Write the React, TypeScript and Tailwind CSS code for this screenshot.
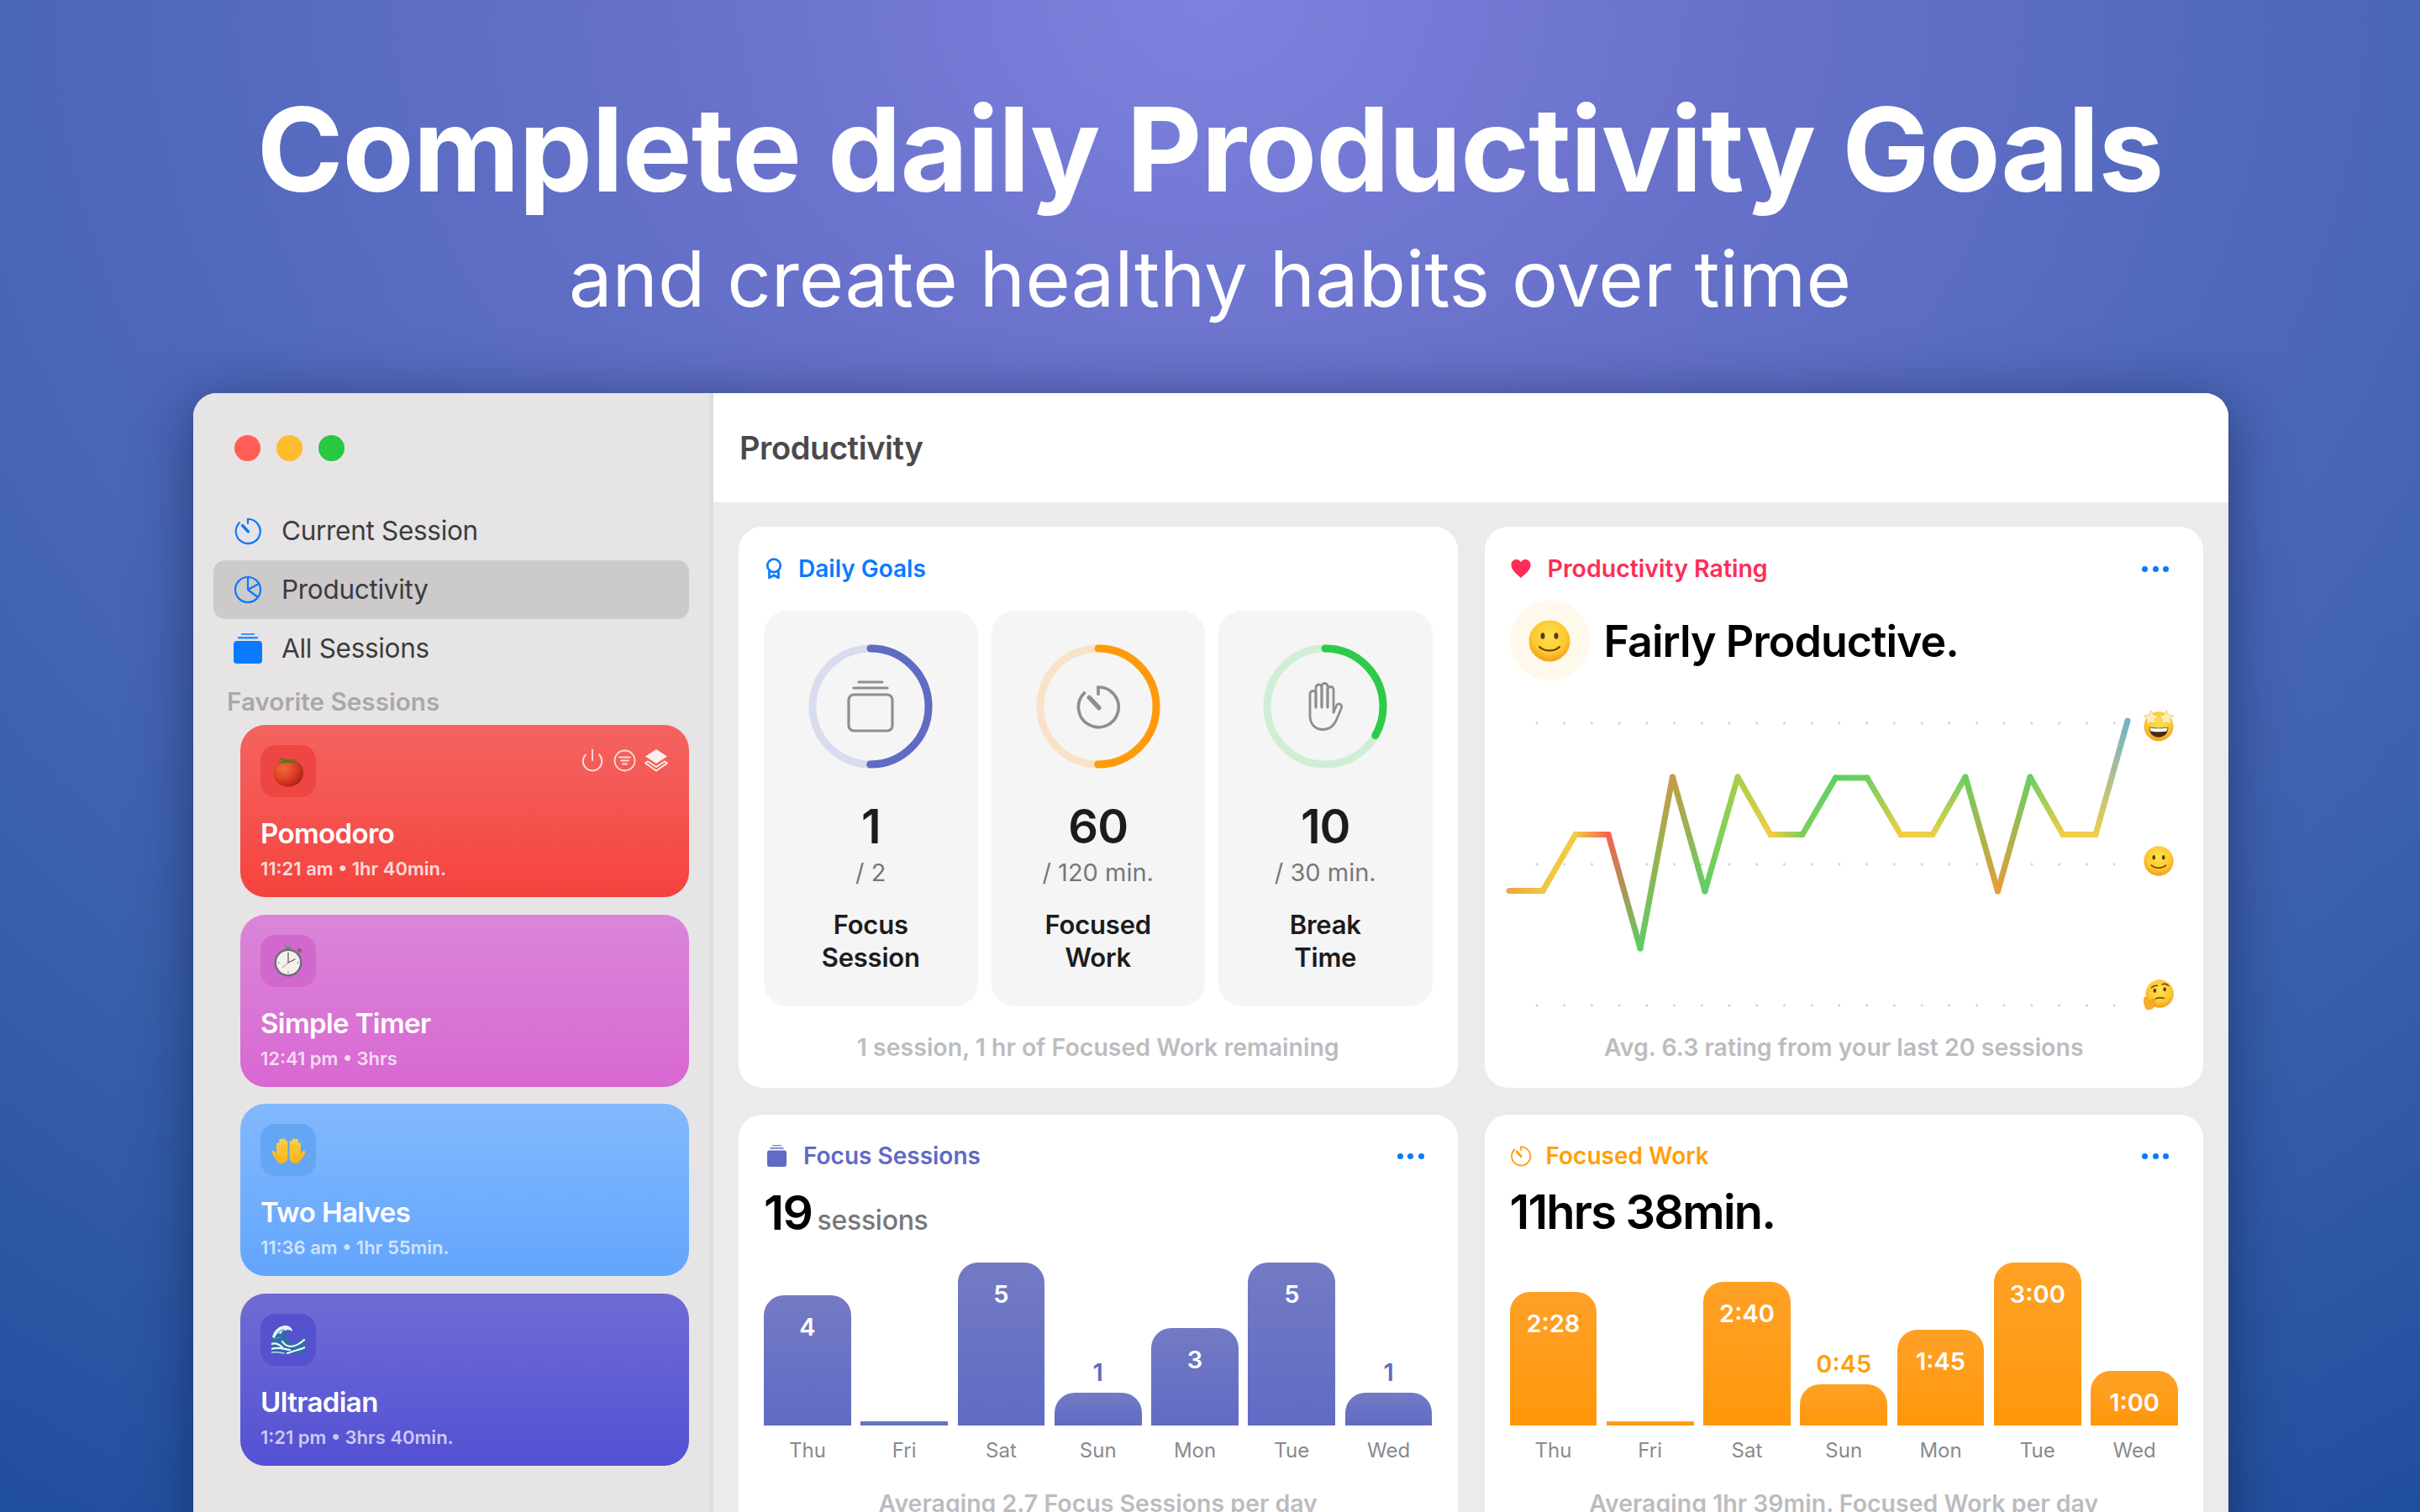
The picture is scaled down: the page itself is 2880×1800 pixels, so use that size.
import React from "react";
import { Power } from "lucide-react";

const TimerIcon = ({ size = 34, color = "#0a7aff", sw = 2.2 }: { size?: number; color?: string; sw?: number }) => (
  <svg width={size} height={size} viewBox="0 0 34 34" fill="none" stroke={color} strokeWidth={sw} strokeLinecap="round">
    <path d="M17 3a14.5 14.5 0 1 1-10 4.2" />
    <path d="M17 3v5" />
    <path d="M17.5 18 10.5 10.5" strokeWidth={sw * 1.5} />
  </svg>
);

const PieIcon = () => (
  <svg width="34" height="34" viewBox="0 0 34 34" fill="none" stroke="#0a7aff" strokeWidth="2.2" strokeLinejoin="round">
    <circle cx="17" cy="17" r="15" />
    <path d="M17 2v15l12 9" />
    <path d="M17 17 30 10" />
  </svg>
);

const StackIcon = ({ color, w = 35, h = 36 }: { color: string; w?: number; h?: number }) => (
  <svg width={w} height={h} viewBox="0 0 35 36" fill={color} preserveAspectRatio="none">
    <rect x="9" y="0" width="17" height="2" rx="1" opacity=".75" />
    <rect x="5" y="4" width="25" height="2.5" rx="1.2" opacity=".85" />
    <rect x="0" y="9" width="35" height="27" rx="4" />
  </svg>
);

const OutlineStack = () => (
  <svg width="56" height="62" viewBox="0 0 56 62" fill="none" stroke="#8e8e93" strokeWidth="3.2" strokeLinecap="round">
    <path d="M14 2h28" />
    <path d="M8 9h40" />
    <rect x="2" y="17" width="52" height="43" rx="6" />
  </svg>
);

const RaisedHand = () => (
  <svg width="44" height="58" viewBox="0 0 44 58" fill="none" stroke="#8e8e93" strokeWidth="2.8" strokeLinecap="round" strokeLinejoin="round">
    <path d="M4 34V14a3.500 3.500 0 0 1 7 0v16" />
    <path d="M11 30V6.500a3.500 3.500 0 0 1 7 0V30" />
    <path d="M18 30V5a3.500 3.500 0 0 1 7 0v25" />
    <path d="M25 30V9a3.500 3.500 0 0 1 7 0v27" />
    <path d="M32 36l3.500-8a3.200 3.200 0 0 1 6 2.400L35 46C31.500 53 27 56.500 19.500 56.500 10 56.500 4 50 4 40v-6" />
  </svg>
);

const ListCircle = () => (
  <svg width="27" height="27" viewBox="0 0 27 27" fill="none" stroke="#fff" strokeOpacity=".8" strokeWidth="1.8" strokeLinecap="round">
    <circle cx="13.5" cy="13.5" r="12" />
    <path d="M7 9.5h13M9 13.5h9M11 17.5h5" />
  </svg>
);

const LayersIcon = () => (
  <svg width="28" height="28" viewBox="0 0 28 28">
    <path d="M14 1 27 9.5 14 18 1 9.5Z" fill="#fff" fillOpacity=".9" />
    <path d="M4 15.5 1 17.5l13 9 13-9-3-2-10 6.5Z" fill="none" stroke="#fff" strokeOpacity=".9" strokeWidth="1.8" strokeLinejoin="round" />
  </svg>
);

const Award = () => (
  <svg width="20" height="26" viewBox="0 0 22 28" fill="none" stroke="#0a7aff" strokeWidth="3" strokeLinejoin="round">
    <circle cx="11" cy="10" r="8.5" />
    <path d="M5 17v9l6-3.500 6 3.500v-9" />
  </svg>
);

const Heart = () => (
  <svg width="24" height="24" viewBox="0 0 24 24" fill="#ff2d55">
    <path d="M12 23C5 17 .5 13 .5 7.5.5 3.6 3.400 1 6.700 1 9 1 11 2.300 12 4.300 13 2.300 15 1 17.300 1c3.300 0 6.200 2.600 6.200 6.500C23.500 13 19 17 12 23Z" />
  </svg>
);

const Dots = () => (
  <div className="flex w-[32px] justify-between">
    <span className="h-[7px] w-[7px] rounded-full bg-[#0a7aff]" />
    <span className="h-[7px] w-[7px] rounded-full bg-[#0a7aff]" />
    <span className="h-[7px] w-[7px] rounded-full bg-[#0a7aff]" />
  </div>
);

const FaceDefs = ({ id }: { id: string }) => (
  <defs>
    <radialGradient id={id} cx=".5" cy=".38" r=".66">
      <stop offset="0" stopColor="#ffe04f" />
      <stop offset=".62" stopColor="#fdc92f" />
      <stop offset="1" stopColor="#f1951a" />
    </radialGradient>
  </defs>
);

const Smile = ({ size, id }: { size: number; id: string }) => (
  <svg width={size} height={size} viewBox="0 0 50 50">
    <FaceDefs id={id} />
    <circle cx="25" cy="25" r="24.500" fill={`url(#${id})`} />
    <ellipse cx="17" cy="19" rx="2.500" ry="3.800" fill="#5a3a14" />
    <ellipse cx="33" cy="19" rx="2.500" ry="3.800" fill="#5a3a14" />
    <path d="M13 32c3.500 3.500 7.500 4.500 12 4.500s8.500-1 12-4.500" fill="none" stroke="#5a3a14" strokeWidth="2" strokeLinecap="round" />
  </svg>
);

const StarPath = ({ cx, cy, r }: { cx: number; cy: number; r: number }) => {
  const pts: string[] = [];
  for (let i = 0; i < 10; i++) {
    const a = (Math.PI / 5) * i - Math.PI / 2;
    const rr = i % 2 ? r * 0.52 : r;
    pts.push(`${(cx + rr * Math.cos(a)).toFixed(2)},${(cy + rr * Math.sin(a)).toFixed(2)}`);
  }
  return <polygon points={pts.join(" ")} fill="#fdeeb9" stroke="#efbb4a" strokeWidth=".9" strokeLinejoin="round" />;
};

const StarStruck = ({ size }: { size: number }) => (
  <svg width={size} height={size} viewBox="0 0 50 50" className="overflow-visible">
    <FaceDefs id="fS" />
    <circle cx="25" cy="26" r="23" fill="url(#fS)" />
    <path d="M10 27c5 2 25 2 30 0 0 10-6 16-15 16S10 37 10 27Z" fill="#4a2a12" />
    <path d="M11 28c6 1.800 22 1.800 28 0-.300 2.500-.700 4-1.500 5.500-6 1.200-19 1.200-25 0C11.700 32 11.300 30.500 11 28Z" fill="#fff" />
    <StarPath cx={13} cy={13} r={12} />
    <StarPath cx={37} cy={13} r={12} />
  </svg>
);

const Thinking = ({ size }: { size: number }) => (
  <svg width={size} height={size} viewBox="0 0 50 50">
    <FaceDefs id="fT" />
    <circle cx="26" cy="23" r="22.500" fill="url(#fT)" />
    <path d="M13 13c3-3 6-3.500 9-3" fill="none" stroke="#5a3a14" strokeWidth="2" strokeLinecap="round" />
    <path d="M30 8c3-1.500 7-1 10 2" fill="none" stroke="#5a3a14" strokeWidth="2" strokeLinecap="round" />
    <ellipse cx="18" cy="18" rx="2.400" ry="3.400" fill="#5a3a14" />
    <ellipse cx="34" cy="16" rx="2.400" ry="3.400" fill="#5a3a14" />
    <path d="M20 31c4-1.800 8-2 13-.8" fill="none" stroke="#5a3a14" strokeWidth="2" strokeLinecap="round" />
    <path d="M4 47c-3-5-4-12-3-17 1-2 3-2 4 0l1 6 10-5c3-1 5 2 2 4l-2 2c3 2 3 4 1 6-1 3-3 5-6 5-3 1-5 1-7-1Z" fill="#f8ac26" stroke="#d98c14" strokeWidth=".7" />
  </svg>
);

const Tomato = () => (
  <svg width="40" height="40" viewBox="0 0 40 40">
    <defs>
      <radialGradient id="tom" cx=".35" cy=".35" r=".75">
        <stop offset="0" stopColor="#f56a3a" />
        <stop offset=".6" stopColor="#d93a22" />
        <stop offset="1" stopColor="#9c1f14" />
      </radialGradient>
    </defs>
    <ellipse cx="20" cy="22" rx="18" ry="16.500" fill="url(#tom)" />
    <path d="M20 8c-3-3-8-3.500-11-3 2 1 4 2 5 3-3 0-5 1-6 3 4-1 8-1 12-1 4 0 8 0 11 2-1-3-3-4-6-4 1-1 3-2 5-2-3-1-7 0-10 2Z" fill="#4c7a22" />
  </svg>
);

const Stopwatch = () => (
  <svg width="36" height="38" viewBox="0 0 36 38">
    <rect x="15" y="0" width="6" height="5" rx="1" fill="#7a7a80" />
    <rect x="13.500" y="0" width="9" height="2.500" rx="1" fill="#8c8c92" />
    <rect x="29" y="4" width="5" height="4" rx="1" fill="#6c6c72" transform="rotate(40 31 6)" />
    <circle cx="18" cy="21" r="16.500" fill="#6f6f76" />
    <circle cx="18" cy="21" r="14" fill="#f4f1ec" />
    <path d="M18 21 18 10M18 21 26 17" stroke="#3a3a40" strokeWidth="1" strokeLinecap="round" />
    <path d="M18 21 11 27" stroke="#d8503c" strokeWidth=".8" />
    <path d="M18 8.500v2M18 31.500v2M5.500 21h2M28.500 21h2" stroke="#77777c" strokeWidth="1" />
  </svg>
);

const PalmOne = ({ flip }: { flip?: boolean }) => (
  <g transform={flip ? "translate(40 0) scale(-1 1)" : undefined}>
    <g fill="url(#palm)">
      <rect x="6" y="6" width="3.400" height="14" rx="1.700" />
      <rect x="9" y="1.500" width="3.600" height="16" rx="1.800" />
      <rect x="12.300" y="1" width="3.600" height="16" rx="1.800" />
      <rect x="15.400" y="3.500" width="3.400" height="14" rx="1.700" />
      <path d="M6 15h12.800l.200 8c0 4-3 7-7 7-4.500 0-6.300-3-6.200-7Z" />
      <path d="M6.500 27C4 24 1 20 .8 17.200c0-1.800 2-2.200 3.200-.6L7 21Z" />
    </g>
    <path d="M5 21c2 1.500 4 1.500 5 3.500" fill="none" stroke="#e8961a" strokeWidth=".8" strokeLinecap="round" />
    <path d="M9.400 8v7M12.700 6v9M15.800 7v8" fill="none" stroke="#f2ab22" strokeWidth=".5" />
  </g>
);

const Palms = () => (
  <svg width="41" height="31" viewBox="0 0 40 30">
    <defs>
      <linearGradient id="palm" gradientUnits="userSpaceOnUse" x1="0" y1="0" x2="0" y2="30">
        <stop offset="0" stopColor="#ffd548" />
        <stop offset="1" stopColor="#f9b31c" />
      </linearGradient>
    </defs>
    <PalmOne />
    <PalmOne flip />
  </svg>
);

const Wave = () => (
  <svg width="40" height="35" viewBox="0 0 40 35">
    <path d="M0 35V14C2 6 9 0 17 1c4 0 8 3 8 7-3-2-6-2-8 1-1 4 2 8 5 12 3 3 8 1 12-3 2-2 4-5 6-6-1 7 0 13 0 24Z" fill="#2e6ea8" />
    <path d="M1 15C3 6 10 1 17 1c4 0 8 3 8 7-3-2-6-3-8-1-4-1-5 2-5 4-4-2-7 1-8 5Z" fill="#eaf3f8" />
    <path d="M4 18c2-2 5-3 7-2M7 11c2-3 5-5 8-5" fill="none" stroke="#5b95c6" strokeWidth="1.200" strokeLinecap="round" />
    <path d="M0 23c5-2 9 0 13 4M0 29c8-3 14 0 22 1M13 20c6 9 16 7 26-2M19 34c8-3 14-4 21-7" fill="none" stroke="#eef6fa" strokeWidth="2.200" strokeLinecap="round" />
    <path d="M0 33c6-1 10 0 15 1" fill="none" stroke="#bcd9ea" strokeWidth="1.500" strokeLinecap="round" />
  </svg>
);

function SessionCard({ name, meta, grad, tile, emoji, icons, metaClass }: { name: string; meta: string; grad: string; tile: string; emoji: React.ReactNode; icons?: boolean; metaClass: string }) {
  return (
    <div className={`h-[205px] rounded-[30px] pl-[24px] pr-[25px] pt-[24px] ${grad}`}>
      <div className="flex items-start justify-between">
        <div className={`flex h-[62px] w-[66px] items-center justify-center rounded-[18px] ${tile}`}>{emoji}</div>
        {icons && (
          <div className="flex items-center gap-[10px] pt-[3px]">
            <Power size={30} color="#fff" strokeOpacity={0.8} strokeWidth={1.5} />
            <ListCircle />
            <LayersIcon />
          </div>
        )}
      </div>
      <div className="mt-[23px] text-[33px] font-semibold leading-[40px] tracking-[-0.6px] text-white">{name}</div>
      <div className={`mt-[7px] text-[22px] font-semibold leading-[30px] ${metaClass}`}>{meta}</div>
    </div>
  );
}

function Ring({ color, track, pct, children }: { color: string; track: string; pct: number; children: React.ReactNode }) {
  const r = 69;
  const c = 2 * Math.PI * r;
  return (
    <div className="relative h-[148px] w-[148px]">
      <svg width="148" height="148" viewBox="0 0 148 148" className="-rotate-90">
        <circle cx="74" cy="74" r={r} fill="none" stroke={track} strokeWidth="9" />
        <circle cx="74" cy="74" r={r} fill="none" stroke={color} strokeWidth="9" strokeLinecap="round" strokeDasharray={`${c * pct} ${c}`} />
      </svg>
      <div className="absolute inset-0 flex items-center justify-center">{children}</div>
    </div>
  );
}

function GoalTile({ ring, value, sub, a, b }: { ring: React.ReactNode; value: string; sub: string; a: string; b: string }) {
  return (
    <div className="flex h-[471px] flex-col items-center rounded-[28px] bg-[#f5f5f5] pt-[40px]">
      {ring}
      <div className="mt-[35px] text-[56px] font-semibold leading-[68px] tracking-[-1px] text-[#1c1c1e]">{value}</div>
      <div className="mt-[3px] text-[29px] leading-[36px] text-[#77777a]">{sub}</div>
      <div className="mt-[24px] text-center text-[31px] font-semibold leading-[39px] tracking-[-0.2px] text-[#1c1c1e]">
        <div>{a}</div>
        <div>{b}</div>
      </div>
    </div>
  );
}

const Footer = ({ children, cls = "" }: { children: React.ReactNode; cls?: string }) => (
  <div className={`text-center text-[28.5px] font-semibold leading-[40px] text-[#bcbcbf] ${cls}`}>{children}</div>
);

type P = [number, number, string];
const pts: P[] = [
  [1796, 1060.5, "#eca93f"],
  [1836, 1060.5, "#efc544"],
  [1875, 993.5, "#f3cc46"],
  [1914, 993.5, "#f8604f"],
  [1952, 1129, "#5bce62"],
  [1990.5, 925, "#c99a44"],
  [2029, 1061, "#5fcf65"],
  [2068, 925, "#a8cf4b"],
  [2107, 993.5, "#f3cc46"],
  [2145, 993.5, "#7ecf5a"],
  [2184.5, 926, "#5fcf65"],
  [2222, 926, "#6fcf5f"],
  [2262, 993.5, "#f3cc46"],
  [2300, 993.5, "#e9d04c"],
  [2339, 925, "#6ccf5f"],
  [2377.5, 1061, "#e69b3d"],
  [2416, 925, "#68cf5f"],
  [2455, 993.5, "#f3cc46"],
  [2494, 993.5, "#f0cc50"],
  [2532, 858, "#6fb3c8"],
];

function RatingChart() {
  const ys = [861, 1029, 1197];
  const xs = Array.from({ length: 22 }, (_, i) => 1829 + i * 32.72);
  return (
    <svg viewBox="1767 810 854 417" width="854" height="417" className="-mx-[30px] block">
      <defs>
        {pts.slice(0, -1).map((p, i) => {
          const n = pts[i + 1];
          return (
            <linearGradient key={i} id={`seg${i}`} gradientUnits="userSpaceOnUse" x1={p[0]} y1={p[1]} x2={n[0]} y2={n[1] + 0.01}>
              <stop offset="0" stopColor={p[2]} />
              <stop offset="1" stopColor={n[2]} />
            </linearGradient>
          );
        })}
      </defs>
      {ys.map((y) => xs.map((x) => <circle key={`${x}-${y}`} cx={x} cy={y} r="1.400" fill="#cfcfd2" />))}
      {pts.slice(0, -1).map((p, i) => {
        const n = pts[i + 1];
        return <line key={i} x1={p[0]} y1={p[1]} x2={n[0]} y2={n[1]} stroke={`url(#seg${i})`} strokeWidth="7" strokeLinecap="round" />;
      })}
      <svg x="2550" y="845" width="38" height="38" viewBox="0 0 50 50" overflow="visible"><StarStruck size={50} /></svg>
      <svg x="2551" y="1007" width="36" height="36" viewBox="0 0 50 50"><Smile size={50} id="fS2" /></svg>
      <svg x="2551" y="1166" width="37" height="37" viewBox="0 0 50 50"><Thinking size={50} /></svg>
    </svg>
  );
}

type Bar = { day: string; h: number; label?: string; outside?: boolean };

function Bars({ bars, grad, outColor }: { bars: Bar[]; grad: string; outColor: string }) {
  return (
    <div>
      <div className="flex h-[194px] items-end gap-[11.5px]">
        {bars.map((b) => (
          <div key={b.day} className="flex flex-1 flex-col justify-end">
            {b.outside && <div className={`mb-[9px] text-center text-[29px] font-semibold leading-[30px] ${outColor}`}>{b.label}</div>}
            <div className={`overflow-hidden ${b.h > 10 ? "rounded-t-[24px]" : ""} ${grad}`} style={{ height: b.h }}>
              {!b.outside && b.label && <div className="pt-[23px] text-center text-[29px] font-semibold leading-[30px] text-white">{b.label}</div>}
            </div>
          </div>
        ))}
      </div>
      <div className="mt-[15px] flex gap-[11.5px]">
        {bars.map((b) => (
          <div key={b.day} className="flex-1 text-center text-[24px] leading-[30px] text-[#8a8a8e]">{b.day}</div>
        ))}
      </div>
    </div>
  );
}

const NavRow = ({ icon, label, active }: { icon: React.ReactNode; label: string; active?: boolean }) => (
  <div className={`flex h-[70px] items-center rounded-[14px] pl-[24px] ${active ? "bg-[#cdcacb]" : ""}`}>
    <span className="flex w-[34px] justify-center">{icon}</span>
    <span className="ml-[23px] text-[31.500px] leading-[40px] tracking-[-0.3px] text-[#3c3c3e]">{label}</span>
  </div>
);

export default function App() {
  return (
    <div className="h-[1800px] w-[2880px] overflow-hidden bg-[radial-gradient(ellipse_2618px_2142px_at_1440px_0px,#7e82de_0%,#6a72cb_22%,#4a66b8_55%,#3a60ac_72%,#204f9e_100%)] [font-family:Inter,sans-serif]">
      <div className="pt-[98px] text-center text-white">
        <h1 className="text-[139px] font-bold leading-[160px] tracking-[-1px]">Complete daily Productivity Goals</h1>
        <p className="mt-[19px] text-[92px] font-normal leading-[110px]">and create healthy habits over time</p>
      </div>
      <div className="ml-[230px] mt-[81px] flex h-[1500px] w-[2422px] overflow-hidden rounded-[28px] bg-[#ebebeb] shadow-[0_10px_70px_rgba(10,25,70,0.55)]">
        <aside className="w-[619px] shrink-0 border-r-[5px] border-[#dfdddd] bg-[#e7e4e5]">
          <div className="flex gap-[19px] pl-[49px] pt-[50px]">
            <span className="h-[31px] w-[31px] rounded-full bg-[#ff5f57]" />
            <span className="h-[31px] w-[31px] rounded-full bg-[#febc2e]" />
            <span className="h-[31px] w-[31px] rounded-full bg-[#28c840]" />
          </div>
          <div className="ml-[24px] mt-[48px] w-[566px]">
            <NavRow icon={<TimerIcon />} label="Current Session" />
            <NavRow icon={<PieIcon />} label="Productivity" active />
            <NavRow icon={<StackIcon color="#0a7aff" />} label="All Sessions" />
          </div>
          <div className="ml-[40px] text-[29.700px] font-semibold leading-[56px] text-[#a9a8aa]">Favorite Sessions</div>
          <div className="ml-[56px] flex w-[534px] flex-col gap-[20.500px]">
            <SessionCard name="Pomodoro" meta="11:21 am • 1hr 40min." grad="bg-gradient-to-b from-[#f4635f] to-[#f5423e]" tile="bg-[#ee4642]" emoji={<Tomato />} icons metaClass="text-white/80" />
            <SessionCard name="Simple Timer" meta="12:41 pm • 3hrs" grad="bg-gradient-to-b from-[#da86d8] to-[#d867d2]" tile="bg-[#d267cd]" emoji={<Stopwatch />} metaClass="text-white/75" />
            <SessionCard name="Two Halves" meta="11:36 am • 1hr 55min." grad="bg-gradient-to-b from-[#82b9fd] to-[#62a5fc]" tile="bg-[#64a6f4]" emoji={<Palms />} metaClass="text-white/70" />
            <SessionCard name="Ultradian" meta="1:21 pm • 3hrs 40min." grad="bg-gradient-to-b from-[#6f6cd4] to-[#5450d4]" tile="bg-[#5551cf]" emoji={<Wave />} metaClass="text-white/70" />
          </div>
        </aside>
        <main className="min-w-0 flex-1">
          <header className="flex h-[130px] items-center bg-white pl-[31px] text-[38px] font-semibold tracking-[-0.4px] text-[#4a4a4c]">Productivity</header>
          <div className="grid grid-cols-2 gap-[32px] px-[30px] pt-[29px]">
            <section className="h-[668px] rounded-[28px] bg-white px-[30px] pt-[30px]">
              <div className="flex h-[40px] items-center">
                <span className="flex w-[24px] justify-center"><Award /></span>
                <span className="ml-[17px] text-[28px] font-semibold text-[#0a7aff]">Daily Goals</span>
              </div>
              <div className="mt-[30px] grid grid-cols-3 gap-[16px]">
                <GoalTile ring={<Ring color="#5f6bc4" track="#d9dcef" pct={0.5}><OutlineStack /></Ring>} value="1" sub="/ 2" a="Focus" b="Session" />
                <GoalTile ring={<Ring color="#ff9a0a" track="#f8e3c9" pct={0.5}><TimerIcon size={56} color="#8e8e93" sw={2.200} /></Ring>} value="60" sub="/ 120 min." a="Focused" b="Work" />
                <GoalTile ring={<Ring color="#2ecb4a" track="#d0eed5" pct={0.333}><RaisedHand /></Ring>} value="10" sub="/ 30 min." a="Break" b="Time" />
              </div>
              <Footer cls="mt-[29px]">1 session, 1 hr of Focused Work remaining</Footer>
            </section>
            <section className="h-[668px] rounded-[28px] bg-white px-[30px] pt-[30px]">
              <div className="flex h-[40px] items-center justify-between pr-[11px]">
                <div className="flex items-center">
                  <span className="flex w-[26px] justify-center"><Heart /></span>
                  <span className="ml-[19px] text-[28.500px] font-semibold text-[#ff2d55]">Productivity Rating</span>
                </div>
                <Dots />
              </div>
              <div className="mt-[18px] flex h-[95px] items-center">
                <div className="flex h-[95px] w-[95px] items-center justify-center rounded-full bg-[#fef9ea]"><Smile size={50} id="fS1" /></div>
                <span className="ml-[17px] pt-[2px] text-[52px] font-semibold tracking-[-1px] text-black">Fairly Productive.</span>
              </div>
              <RatingChart />
              <Footer>Avg. 6.3 rating from your last 20 sessions</Footer>
            </section>
            <section className="h-[668px] rounded-[28px] bg-white px-[30px] pt-[29px]">
              <div className="flex h-[40px] items-center justify-between pr-[10px]">
                <div className="flex items-center">
                  <span className="ml-[4px]"><StackIcon color="#5f6bc4" w={23} h={26} /></span>
                  <span className="ml-[20px] text-[28px] font-semibold text-[#5f6bc4]">Focus Sessions</span>
                </div>
                <Dots />
              </div>
              <div className="mt-[5px] flex h-[60px] items-baseline">
                <span className="text-[57px] font-semibold tracking-[-1.5px] text-black">19</span>
                <span className="ml-[6px] text-[32px] font-medium tracking-[-0.3px] text-[#77777a]">sessions</span>
              </div>
              <div className="mt-[42px]">
                <Bars
                  grad="bg-gradient-to-b from-[#747ac4] to-[#5f6bc4]"
                  outColor="text-[#5f6bc4]"
                  bars={[
                    { day: "Thu", h: 155, label: "4" },
                    { day: "Fri", h: 5 },
                    { day: "Sat", h: 194, label: "5" },
                    { day: "Sun", h: 39, label: "1", outside: true },
                    { day: "Mon", h: 116, label: "3" },
                    { day: "Tue", h: 194, label: "5" },
                    { day: "Wed", h: 39, label: "1", outside: true },
                  ]}
                />
              </div>
              <Footer cls="mt-[28px]">Averaging 2.7 Focus Sessions per day</Footer>
            </section>
            <section className="h-[668px] rounded-[28px] bg-white px-[30px] pt-[29px]">
              <div className="flex h-[40px] items-center justify-between pr-[11px]">
                <div className="flex items-center">
                  <TimerIcon size={26} color="#ff9f0a" sw={2.400} />
                  <span className="ml-[17px] text-[28px] font-semibold text-[#ff9f0a]">Focused Work</span>
                </div>
                <Dots />
              </div>
              <div className="mt-[5px] flex h-[60px] items-baseline">
                <span className="text-[56px] font-semibold tracking-[-1.8px] text-black">11hrs 38min.</span>
              </div>
              <div className="mt-[42px]">
                <Bars
                  grad="bg-gradient-to-b from-[#ffa125] to-[#ff9707]"
                  outColor="text-[#ff9f0a]"
                  bars={[
                    { day: "Thu", h: 159, label: "2:28" },
                    { day: "Fri", h: 5 },
                    { day: "Sat", h: 171, label: "2:40" },
                    { day: "Sun", h: 49, label: "0:45", outside: true },
                    { day: "Mon", h: 114, label: "1:45" },
                    { day: "Tue", h: 194, label: "3:00" },
                    { day: "Wed", h: 65, label: "1:00" },
                  ]}
                />
              </div>
              <Footer cls="mt-[28px]">Averaging 1hr 39min. Focused Work per day</Footer>
            </section>
          </div>
        </main>
      </div>
    </div>
  );
}
